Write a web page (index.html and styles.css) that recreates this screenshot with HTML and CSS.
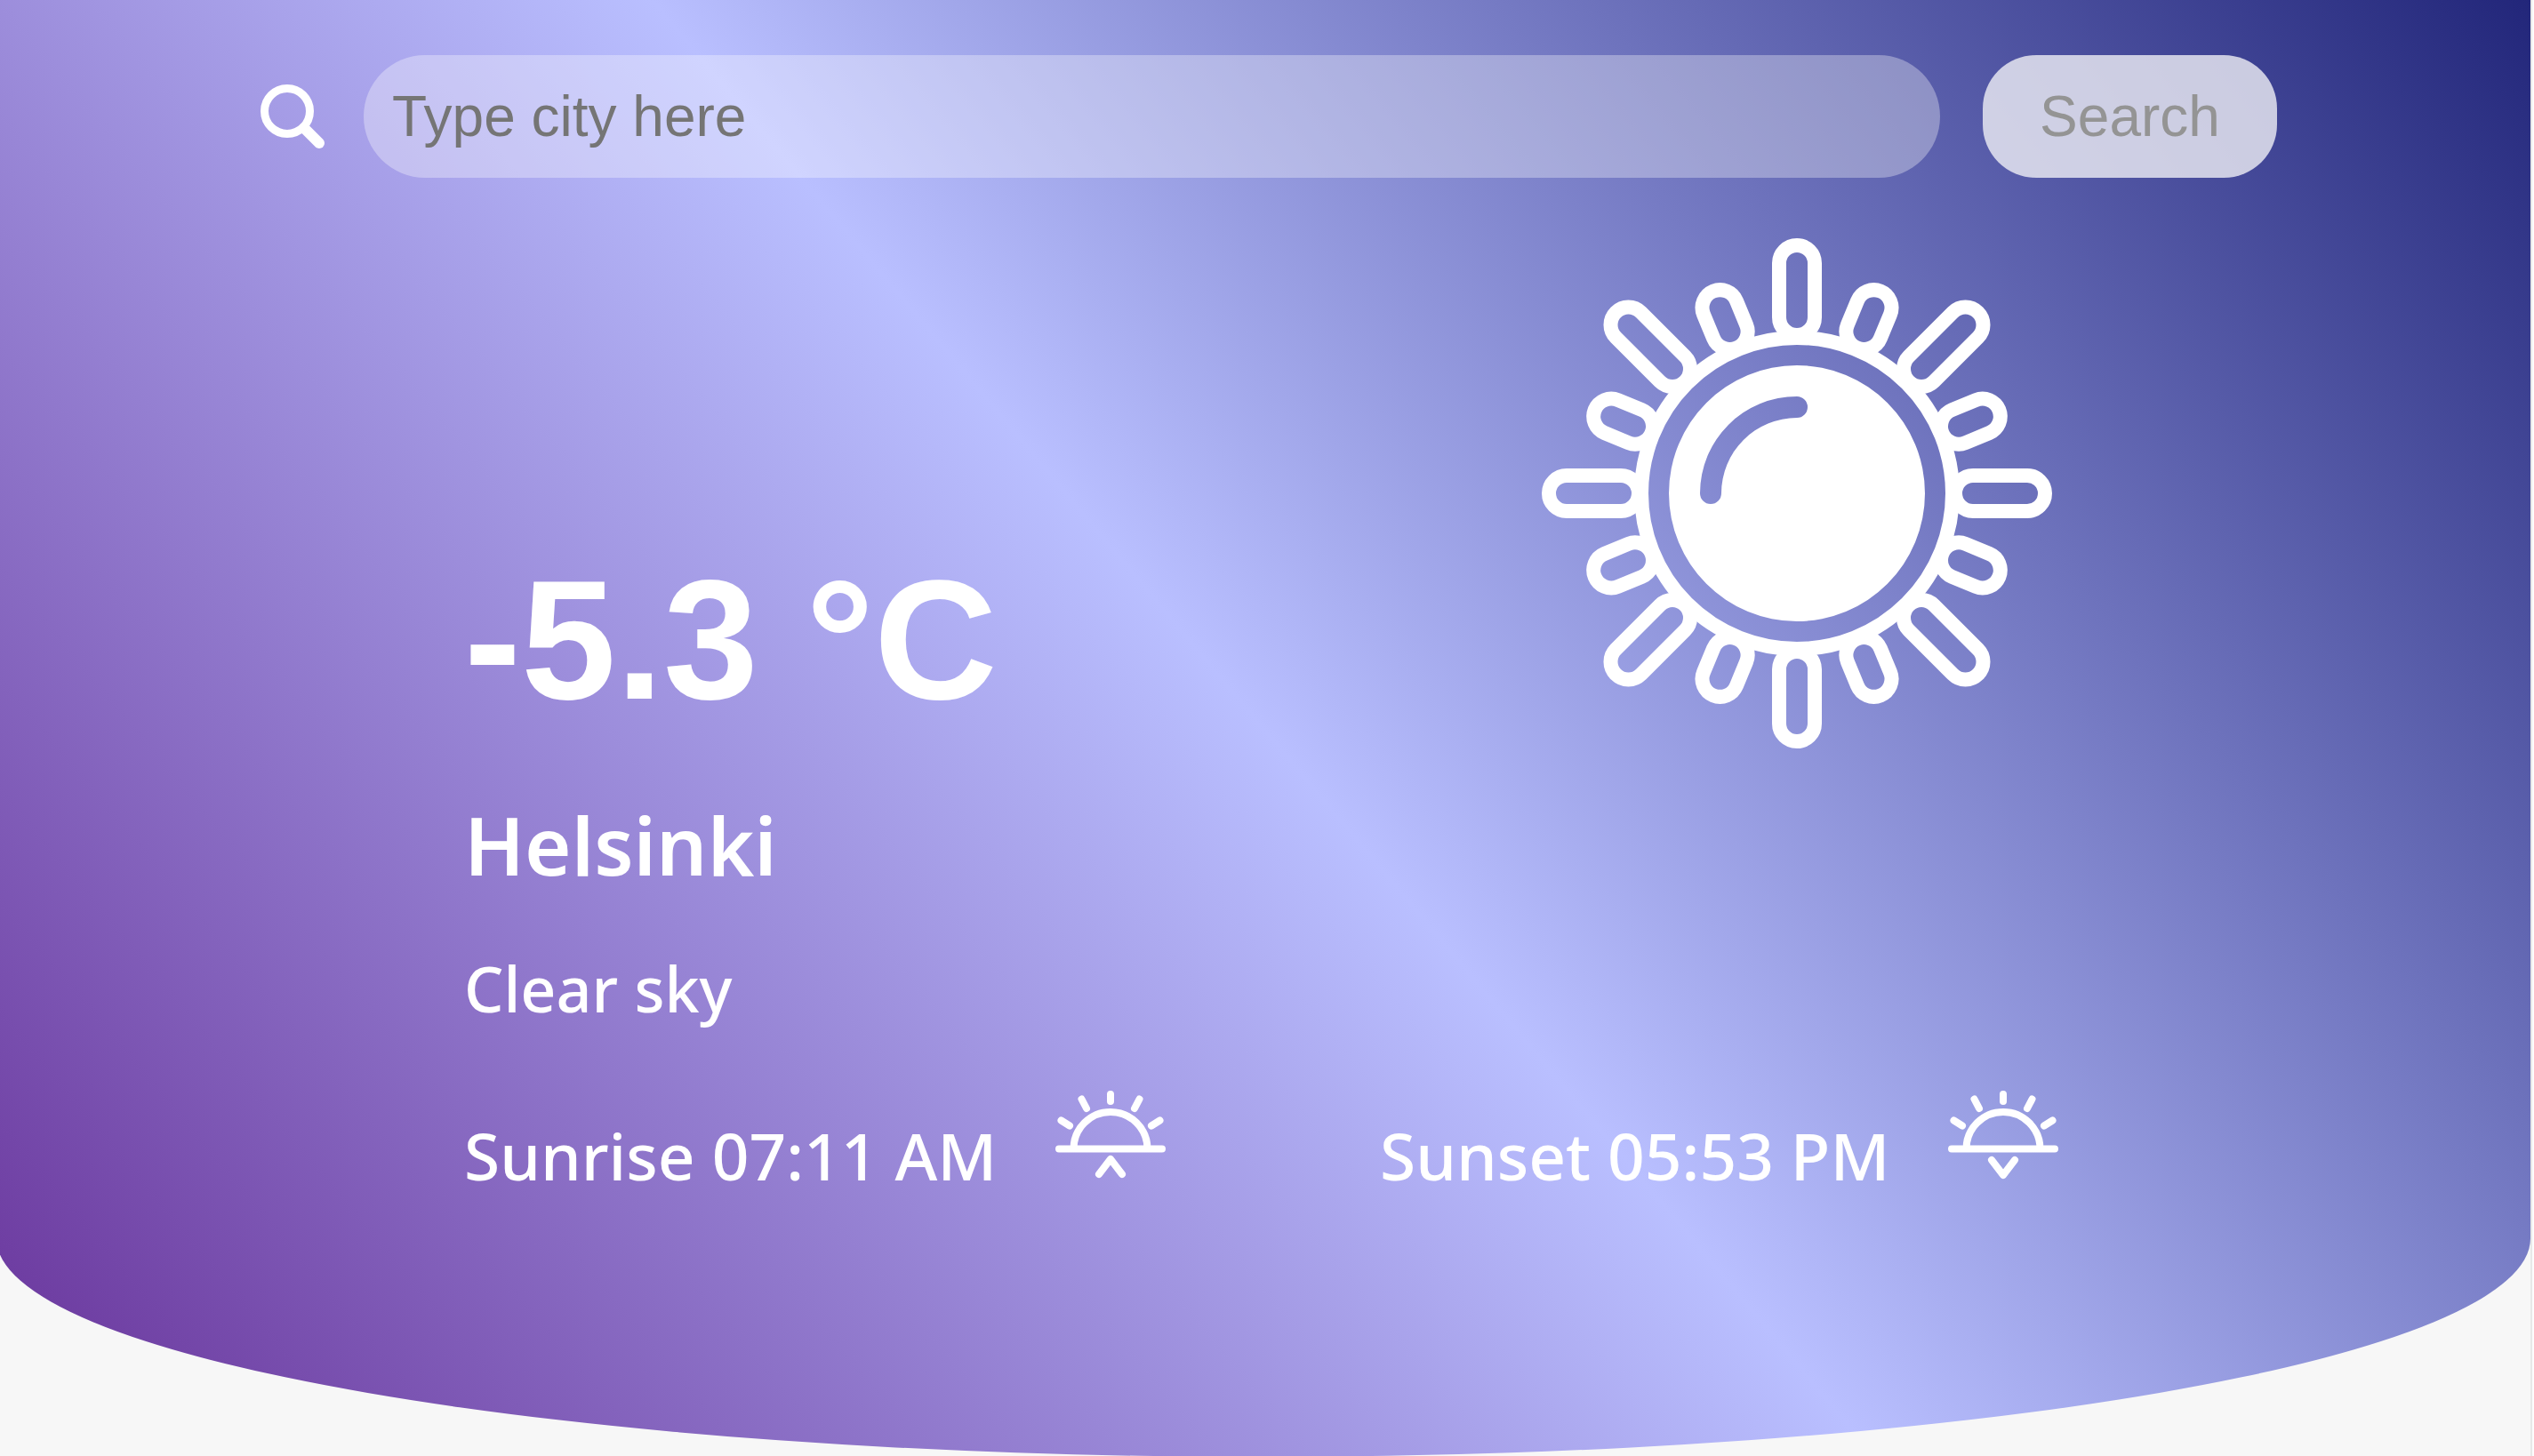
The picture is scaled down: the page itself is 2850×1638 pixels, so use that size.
FILE: index.html
```html
<!DOCTYPE html>
<html lang="en">
<head>
<meta charset="utf-8">
<meta name="viewport" content="width=device-width, initial-scale=1">
<title>Weather in Helsinki</title>
<link rel="stylesheet" href="styles.css">
</head>
<body>
<main class="weather">
  <form class="search">
    <label class="search-label" for="city" aria-label="City">
      <svg class="search-icon" viewBox="0 0 72 72" aria-hidden="true">
        <circle cx="30" cy="30" r="25.5"/>
        <path class="search-handle" d="M49 49L66 66"/>
      </svg>
    </label>
    <input class="search-input" id="city" type="text" placeholder="Type city here">
    <button class="search-button" type="submit" disabled>Search</button>
  </form>

  <section class="current">
    <div class="summary">
      <h1 class="temperature">-5.3 °C</h1>
      <h2 class="city">Helsinki</h2>
      <p class="description">Clear sky</p>
    </div>
    <svg class="sun" viewBox="-287 -287 574 574" role="img" aria-label="Clear sky">
      <defs>
        <rect id="ray-main" x="-20" y="-279" width="40" height="101" rx="20"/>
        <rect id="ray-diagonal" x="-20" y="-288" width="40" height="110" rx="20"/>
        <rect id="ray-short" x="-20" y="-246" width="40" height="69" rx="20"/>
      </defs>
      <g class="sun-lines">
        <circle r="175"/>
        <use href="#ray-main"/>
        <use href="#ray-short" transform="rotate(22.5)"/>
        <use href="#ray-diagonal" transform="rotate(45)"/>
        <use href="#ray-short" transform="rotate(67.5)"/>
        <use href="#ray-main" transform="rotate(90)"/>
        <use href="#ray-short" transform="rotate(112.5)"/>
        <use href="#ray-diagonal" transform="rotate(135)"/>
        <use href="#ray-short" transform="rotate(157.5)"/>
        <use href="#ray-main" transform="rotate(180)"/>
        <use href="#ray-short" transform="rotate(202.5)"/>
        <use href="#ray-diagonal" transform="rotate(225)"/>
        <use href="#ray-short" transform="rotate(247.5)"/>
        <use href="#ray-main" transform="rotate(270)"/>
        <use href="#ray-short" transform="rotate(292.5)"/>
        <use href="#ray-diagonal" transform="rotate(315)"/>
        <use href="#ray-short" transform="rotate(337.5)"/>
      </g>
      <path class="sun-disc" fill-rule="evenodd" d="M0 -144A144 144 0 1 1 0 144A144 144 0 1 1 0 -144ZM0 -109A109 109 0 0 0 -109 0A12 12 0 0 0 -85 0A85 85 0 0 1 0 -85A12 12 0 0 0 0 -109Z"/>
    </svg>
  </section>

  <section class="times">
    <div class="time">
      <p class="time-text">Sunrise 07:11 AM</p>
      <svg class="time-icon" viewBox="0 0 124 100" aria-hidden="true">
        <path d="M4 65.500H120M20.500 65.500A41.500 41.500 0 0 1 103.500 65.500M62 4V12M29.500 9.500L35 20M94.500 9.500L89 20M6.500 33.500L16 39.500M117.500 33.500L108 39.500M49 94L62 77L75 94"/>
      </svg>
    </div>
    <div class="time">
      <p class="time-text">Sunset 05:53 PM</p>
      <svg class="time-icon" viewBox="0 0 124 100" aria-hidden="true">
        <path d="M4 65.500H120M20.500 65.500A41.500 41.500 0 0 1 103.500 65.500M62 4V12M29.500 9.500L35 20M94.500 9.500L89 20M6.500 33.500L16 39.500M117.500 33.500L108 39.500M49 78L62 95L75 78"/>
      </svg>
    </div>
  </section>
</main>
</body>
</html>
```

FILE: styles.css
```css
* {
  box-sizing: border-box;
}

html {
  background: #fcfcfc;
}

body {
  margin: 0 2px 0 -4px;
  min-height: 100vh;
  overflow: hidden;
  border-right: 2px solid #e8e8e8;
  background: #f7f7f7;
  color: #fff;
  font-family: "Noto Sans", sans-serif;
}

h1, h2, p {
  margin: 0;
}

.weather {
  padding: 62px 285px 266px 297px;
  border-radius: 0 0 50% 50% / 0 0 15% 15%;
  background: linear-gradient(50deg, #673199 0%, #b9bfff 50%, #22267a 100%);
}

.search {
  display: flex;
  align-items: center;
}

.search-label {
  display: flex;
  margin-right: 44px;
}

.search-icon {
  width: 72px;
  height: 72px;
  fill: none;
  stroke: #fff;
  stroke-width: 9;
  stroke-linecap: round;
}

.search-handle {
  stroke-width: 12;
}

.search-input,
.search-button {
  height: 138px;
  border: 0;
  font: 64px "Liberation Sans", Arial, sans-serif;
}

.search-input {
  flex: 1;
  min-width: 0;
  margin-right: 48px;
  padding: 0 32px;
  border-radius: 69px;
  background: rgba(255, 255, 255, 0.33);
  color: #757575;
}

.search-input::placeholder {
  color: #757575;
}

.search-button {
  width: 331px;
  padding: 0;
  border-radius: 60px;
  background: rgba(239, 239, 245, 0.8);
  color: #949494;
}

.current {
  display: grid;
  grid-template-columns: 1212px 574px;
  margin: 68px 0 0 229px;
}

.summary {
  padding-top: 342px;
}

.temperature {
  font: bold 192px/220px "Liberation Sans", Arial, sans-serif;
}

.city {
  margin-top: 60px;
  font-size: 90px;
  font-weight: 600;
  line-height: 120px;
}

.description {
  margin-top: 58px;
  font-size: 70px;
  font-weight: 500;
  line-height: 88px;
}

.sun {
  width: 574px;
  height: 574px;
}

.sun-lines {
  fill: none;
  stroke: #fff;
  stroke-width: 16;
}

.sun-disc {
  fill: #fff;
}

.times {
  display: grid;
  grid-template-columns: 1030px 1fr;
  margin: 71px 0 0 229px;
}

.time {
  display: flex;
  align-items: flex-start;
  gap: 66px;
}

.time-text {
  font-size: 73px;
  font-weight: 500;
  line-height: 146px;
}

.time-icon {
  width: 124px;
  height: 100px;
  fill: none;
  stroke: #fff;
  stroke-width: 8;
  stroke-linecap: round;
  stroke-linejoin: round;
}
```
